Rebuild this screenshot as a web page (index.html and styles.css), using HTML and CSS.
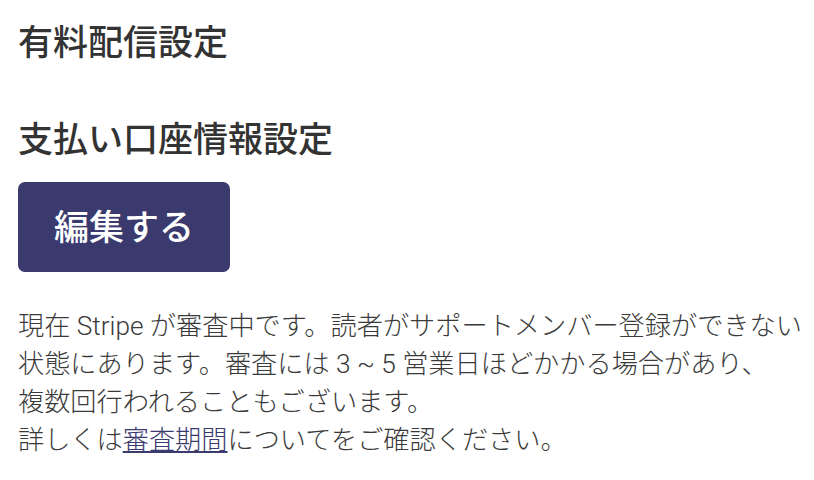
FILE: index.html
```html
<!DOCTYPE html>
<html lang="ja">
<head>
<meta charset="utf-8">
<link rel="stylesheet" href="styles.css">
</head>
<body>
<main class="page">
  <h2 class="section-title">有料配信設定</h2>
  <h2 class="section-title sub">支払い口座情報設定</h2>
  <button class="edit-btn" type="button">編集する</button>
  <p class="notice">現在 Stripe が審査中です。読者がサポートメンバー登録ができない<br>状態にあります。審査には 3 ~ 5 営業日ほどかかる場合があり、<br>複数回行われることもございます。<br>詳しくは<a class="link" href="#">審査期間</a>についてをご確認ください。</p>
</main>
</body>
</html>
```
FILE: styles.css
```css
html, body {
  margin: 0;
  padding: 0;
  background: #ffffff;
}
body {
  font-family: Roboto, "Noto Sans CJK JP", sans-serif;
  color: #333333;
}
.page {
  padding: 14px 0 0 18px;
  display: flex;
  flex-direction: column;
  align-items: flex-start;
}
.section-title {
  margin: 0;
  font-size: 35px;
  line-height: 52px;
  font-weight: 500;
  color: #333333;
  font-family: "Noto Sans CJK JP", sans-serif;
}
.section-title.sub {
  margin-top: 45px;
}
.edit-btn {
  margin-top: 19px;
  width: 212px;
  height: 90px;
  padding: 0 0 4px;
  border: none;
  border-radius: 7px;
  background: #3a3a6e;
  color: #ffffff;
  font-family: "Noto Sans CJK JP", sans-serif;
  font-size: 35px;
  font-weight: 500;
  line-height: 52px;
}
.notice {
  margin: 35px 0 0;
  font-size: 26.2px;
  line-height: 38px;
  color: #3a3a3a;
  font-weight: 300;
  white-space: nowrap;
}
.link {
  color: #3a3a6e;
  text-decoration: underline;
}
```
